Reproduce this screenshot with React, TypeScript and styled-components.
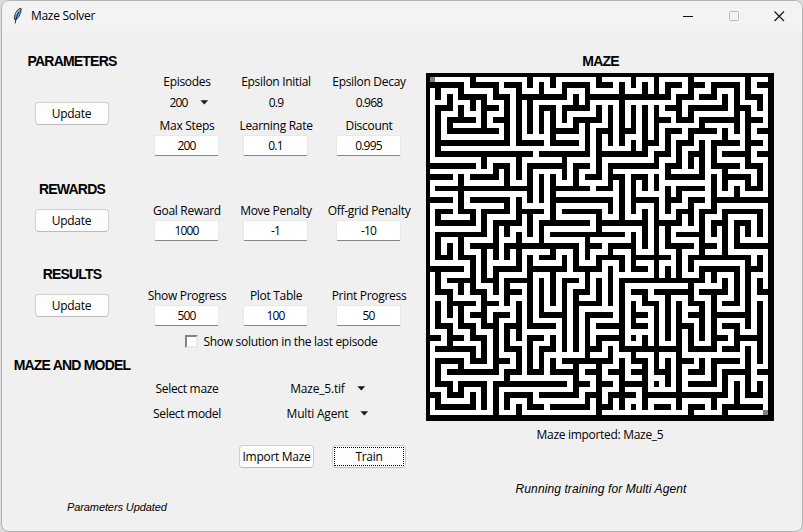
import React from "react";
import styled, { createGlobalStyle } from "styled-components";

const GlobalStyle = createGlobalStyle`
  * { box-sizing: border-box; }
  body { margin: 0; background: #dcdcdc; overflow: hidden; }
`;

const Window = styled.div`
  width: 802px;
  height: 532px;
  margin-left: 1px;
  display: flex;
  flex-direction: column;
  background: #f0f0f0;
  border: 1px solid #b4b4b4;
  border-radius: 8px;
  overflow: hidden;
  color: #000;
  font: 12px/16px "Open Sans", "Noto Sans", sans-serif;
  letter-spacing: -0.3px;
  white-space: nowrap;
`;

const TitleBar = styled.header`
  display: flex;
  align-items: center;
  flex: none;
  height: 30px;
  padding-left: 9px;
  background: #f3f3f3;
`;

const Title = styled.span`
  flex: 1;
  margin-left: 8px;
`;

const CaptionButton = styled.span<{ $muted?: boolean }>`
  display: flex;
  align-items: center;
  justify-content: center;
  width: 46px;
  height: 30px;
  color: ${(p) => (p.$muted ? "#bdbdbd" : "#111")};
  &:last-child { width: 45px; }
`;

const Body = styled.main`
  display: flex;
  flex: 1;
`;

const Controls = styled.div`
  width: 424px;
  padding-top: 20px;
`;

const Section = styled.section<{ $height: number; $rows: string }>`
  display: grid;
  grid-template-columns: 139px 92px 86px 100px;
  grid-template-rows: ${(p) => p.$rows};
  align-content: start;
  justify-items: center;
  align-items: center;
  height: ${(p) => p.$height}px;
`;

const Heading = styled.h2`
  margin: 0;
  width: 139px;
  padding-left: 1px;
  text-align: center;
  font: bold 14px/20px "Liberation Sans", Arial, sans-serif;
  letter-spacing: -0.8px;
`;

const SectionHeading = styled(Heading)`
  grid-column: 1 / -1;
  justify-self: start;
`;

const SideCell = styled.div<{ $span: number }>`
  grid-column: 1;
  grid-row: 2 / span ${(p) => p.$span};
`;

const WideCell = styled.div`
  display: flex;
  align-items: center;
  gap: 6px;
  grid-column: 2 / -1;
  padding-left: 2px;
`;

const MenuCell = styled.div`
  grid-column: 3 / -1;
  padding-top: 2px;
`;

const Label = styled.label<{ $column?: number }>`
  grid-column: ${(p) => p.$column ?? "auto"};
  padding-top: 2px;
`;

const Value = styled.span`
  letter-spacing: -0.8px;
`;

const Field = styled.input`
  width: 65px;
  height: 21px;
  margin: -2px 1px 0 0;
  padding: 0 0 1px;
  border: 1px solid #e8e8e8;
  border-bottom-color: #868686;
  border-radius: 2px;
  background: #fff;
  color: #000;
  text-align: center;
  font: inherit;
  letter-spacing: -0.8px;
  outline: none;
`;

const Button = styled.button<{ $width?: number; $focused?: boolean }>`
  display: flex;
  width: ${(p) => p.$width ?? 74}px;
  height: 23px;
  padding: 1px;
  border: 1px solid #d0d0d0;
  border-bottom-color: #bcbcbc;
  border-radius: 4px;
  background: #fdfdfd;
  color: #000;
  font: inherit;
  letter-spacing: inherit;
  & > span {
    flex: 1;
    height: 19px;
    line-height: ${(p) => (p.$focused ? 18 : 20)}px;
    border: ${(p) => (p.$focused ? "1px dotted #000" : "none")};
  }
`;

const Menu = styled.div<{ $numeric?: boolean }>`
  display: flex;
  align-items: center;
  gap: 12px;
  padding-left: 4px;
  letter-spacing: ${(p) => (p.$numeric ? "-0.8px" : "-0.2px")};
`;

const CheckBox = styled.span`
  width: 13px;
  height: 13px;
  border: 2px solid;
  border-color: #828282 #e9e9e9 #e9e9e9 #828282;
  background: #fff;
`;

const Actions = styled.div`
  display: flex;
  gap: 18px;
  margin-left: 237px;
`;

const Note = styled.p<{ $size: number }>`
  margin: 0;
  font: italic ${(p) => p.$size}px/16px "Liberation Sans", Arial, sans-serif;
  letter-spacing: ${(p) => (p.$size === 12 ? "0.1px" : "-0.1px")};
`;

const Footer = styled.footer`
  margin: 31px 0 0 65px;
`;

const MazePanel = styled.div`
  display: flex;
  flex-direction: column;
  align-items: center;
  width: 348px;
  padding-top: 20px;
`;

const MazeView = styled.svg`
  display: block;
  width: 348px;
  height: 348px;
  margin: 2px 0 6px;
`;

const MazeStatus = styled.div`
  margin: 38px 0 0 2px;
`;

/* Walls of rows 1..59: each line lists the columns that are blocked.
   Cells where both row and column are even are always solid. */
const WALLS = `8 18 22 30 36 40 46 56
1 3 5 9 11 15 25 27 31 43 47 51 53 59
2 6 12 16 20 24 28 34 38 40 42 46 50 54 56
7 9 13 17 19 21 23 29 31 33 35 37 39 41 45 49 57
4 8 10 14 16 18 26 28 34 44 52 54 58
3 11 21 25 27 43 47 49 51 55
2 6 10 14 16 18 20 22 24 30 32 34 36 38 40 44 46 54 56
5 7 13 27 29 41 45 49 51 53 57
2 4 10 14 16 18 20 22 26 28 32 34 36 38 40 48 54 56
5 7 9 11 23 25 31 35 43 47 49 59
2 14 16 22 28 30 32 34 38 40 42 46 52 56
3 5 7 9 11 13 17 19 23 25 39 45 51 53 57
2 28 30 36 38 42 44 48 50 56
3 5 7 9 11 13 15 17 21 23 25 27 31 33 35 37 41 47 53 55 59
10 16 24 30 40 44 46 48 50 56
1 3 5 7 13 19 21 23 27 33 35 37 39 43 51 53 57
12 14 16 18 24 26 30 32 42 48 52 58
1 3 9 11 29 33 37 43 45 47 53 55
6 14 18 20 22 26 32 34 36 38 40 50 52 56 58
3 5 7 9 11 13 15 17 23 25 27 31 45 47 57
6 18 20 22 34 36 42 44 50 54
1 3 9 11 13 23 25 27 29 31 37 39 43 47 51 53 55 57 59
6 14 16 22 32 34 36 40 42 46 50
3 7 11 13 17 19 25 27 29 45 49 53 55 57
2 8 10 16 18 22 30 34 38 40 44 46 48 52 58
3 5 7 13 15 21 23 25 27 31 33 35 37 41 43 51 55
10 12 14 18 20 30 38 40 42 48 50 52 54 56 58
3 5 7 9 23 25 27 29 31 33 45 47
2 6 12 16 20 28 36 38 40 42 48 52 54
9 11 15 17 19 21 23 25 29 33 35 43 45 49 55 57 59
2 4 6 10 12 14 16 22 26 28 32 36 40 44 48 52
3 7 21 31 33 37 39 41 47 49 51 53 55
8 10 16 18 24 26 30 34 36 40 44 46 56 58
1 3 5 13 15 19 21 23 27 29 37 49 51 53 57
2 8 10 12 18 22 28 32 40 42 44 48 50 54 56
5 7 11 15 17 25 35 37 39 41 43 45 47
2 6 8 12 14 18 20 22 24 28 30 32 34 46 52 54 56 58
3 9 15 27 37 41 43 45 49 51 59
4 10 14 18 20 22 24 26 30 32 34 38 42 46 50 54 56
5 7 11 27 29 39 47 53
2 4 6 10 16 18 20 24 26 34 36 40 42 44 48 50 56 58
9 13 21 23 29 31 37 47 51 53 55
2 6 10 12 16 18 24 26 28 34 36 40 42 44 48 50 56 58
3 7 11 15 19 21 31 33 37 45 53
4 8 12 14 16 24 26 28 34 40 42 44 46 48 50 54 58
1 5 9 19 31 33 51 55 57
4 10 12 14 18 22 24 26 28 30 34 38 40 44 46 50 54 58
3 5 7 15 21 29 35 37 39 41 43 47 49 53
8 10 12 16 18 20 28 32 36 40 44 56 58
3 5 9 13 25 27 29 31 37 45 51 53
2 6 12 16 18 20 22 26 30 34 38 40 42 44 48 50 56
5 7 9 11 15 19 23 25 29 33 37 41 47 53 55 59
2 14 26 30 34 38 42 44 50 52 56
3 7 9 13 15 17 19 21 23 27 31 35 37 47 49
4 6 10 12 26 30 34 38 44 52 54 56 58
1 5 15 17 21 23 25 29 33 35 39 41 43 45 47 49 51 57
2 8 10 12 14 18 28 30 32 34 38 44 50 54
3 5 7 19 23 25 27 31 41 47 53 55 57
12 16 30 46 52`
  .split("\n")
  .map((line) => new Set(line.split(" ").map(Number)));

const CELLS = 61;
const edge = (i: number) => Math.round((i * 350) / CELLS);

const isOpen = (r: number, c: number) =>
  r > 0 && c > 0 && r < CELLS - 1 && c < CELLS - 1 &&
  !(r % 2 === 0 && c % 2 === 0) && !WALLS[r - 1].has(c);

const cellPath = (r: number, c: number) =>
  `M${edge(c)} ${edge(r)}H${edge(c + 1)}V${edge(r + 1)}H${edge(c)}Z`;

const corridors = (() => {
  let d = "";
  for (let r = 1; r < CELLS - 1; r++)
    for (let c = 1; c < CELLS - 1; c++) if (isOpen(r, c)) d += cellPath(r, c);
  return d;
})();

function Maze() {
  return (
    <MazeView viewBox="2 2 348 348" shapeRendering="crispEdges">
      <rect width="350" height="350" fill="#000" />
      <path d={corridors} fill="#fff" />
      <path d={cellPath(1, 1) + cellPath(59, 59)} fill="#808080" />
    </MazeView>
  );
}

function Feather() {
  return (
    <svg width="12" height="18" viewBox="0 0 12 18">
      <path d="M10 1.2C7.4 1.6 5 4.2 4 7.6 3.4 9.6 3.2 11 3.4 12.4L5 12.6C7 11.4 9 8.4 9.8 5 10.2 3.4 10.3 2 10 1.2Z" fill="#5b9bd8" stroke="#2a2f38" strokeWidth="0.9" />
      <path d="M8 4.6C6.4 7.4 5 10.6 4.2 16.4" fill="none" stroke="#0b1c38" strokeWidth="0.9" />
      <path d="M5 7.4L6.4 4.8L8 3" fill="none" stroke="#c9dcee" strokeWidth="0.9" />
    </svg>
  );
}

function OptionMenu({ text, numeric }: { text: string; numeric?: boolean }) {
  return (
    <Menu $numeric={numeric}>
      {text}
      <svg width="9" height="5" viewBox="0 0 9 5">
        <path d="M0.4 0.3H8.2L4.3 4.4Z" fill="#1a1a1a" />
      </svg>
    </Menu>
  );
}

function UpdateCell({ span }: { span: number }) {
  return (
    <SideCell $span={span}>
      <Button><span>Update</span></Button>
    </SideCell>
  );
}

export default function App() {
  return (
    <>
      <GlobalStyle />
      <Window>
        <TitleBar>
          <Feather />
          <Title>Maze Solver</Title>
          <CaptionButton>
            <svg width="11" height="11"><path d="M0 5.5H10" stroke="currentColor" /></svg>
          </CaptionButton>
          <CaptionButton $muted>
            <svg width="11" height="11"><rect x="0.5" y="0.5" width="9" height="9" rx="1" fill="none" stroke="currentColor" /></svg>
          </CaptionButton>
          <CaptionButton>
            <svg width="11" height="11"><path d="M0.5 0.5L10 10M10 0.5L0.5 10" stroke="currentColor" strokeWidth="1.1" /></svg>
          </CaptionButton>
        </TitleBar>
        <Body>
          <Controls>
            <Section $height={128} $rows="19px 21px 23px 22px 21px">
              <SectionHeading>PARAMETERS</SectionHeading>
              <UpdateCell span={4} />
              <Label>Episodes</Label>
              <Label>Epsilon Initial</Label>
              <Label>Epsilon Decay</Label>
              <OptionMenu text="200" numeric />
              <Value>0.9</Value>
              <Value>0.968</Value>
              <Label>Max Steps</Label>
              <Label>Learning Rate</Label>
              <Label>Discount</Label>
              <Field defaultValue="200" />
              <Field defaultValue="0.1" />
              <Field defaultValue="0.995" />
            </Section>
            <Section $height={85} $rows="20px 22px 21px">
              <SectionHeading>REWARDS</SectionHeading>
              <UpdateCell span={2} />
              <Label>Goal Reward</Label>
              <Label>Move Penalty</Label>
              <Label>Off-grid Penalty</Label>
              <Field defaultValue="1000" />
              <Field defaultValue="-1" />
              <Field defaultValue="-10" />
            </Section>
            <Section $height={91} $rows="20px 22px 21px 29px">
              <SectionHeading>RESULTS</SectionHeading>
              <UpdateCell span={2} />
              <Label>Show Progress</Label>
              <Label>Plot Table</Label>
              <Label>Print Progress</Label>
              <Field defaultValue="500" />
              <Field defaultValue="100" />
              <Field defaultValue="50" />
              <WideCell>
                <CheckBox />
                <span>Show solution in the last episode</span>
              </WideCell>
            </Section>
            <Section $height={90} $rows="20px 25px 25px">
              <SectionHeading>MAZE AND MODEL</SectionHeading>
              <Label $column={2}>Select maze</Label>
              <MenuCell><OptionMenu text="Maze_5.tif" /></MenuCell>
              <Label $column={2}>Select model</Label>
              <MenuCell><OptionMenu text="Multi Agent" /></MenuCell>
            </Section>
            <Actions>
              <Button $width={75}><span>Import Maze</span></Button>
              <Button $focused><span>Train</span></Button>
            </Actions>
            <Footer>
              <Note $size={11}>Parameters Updated</Note>
            </Footer>
          </Controls>
          <MazePanel>
            <Heading>MAZE</Heading>
            <Maze />
            <span>Maze imported: Maze_5</span>
            <MazeStatus>
              <Note $size={12}>Running training for Multi Agent</Note>
            </MazeStatus>
          </MazePanel>
        </Body>
      </Window>
    </>
  );
}
